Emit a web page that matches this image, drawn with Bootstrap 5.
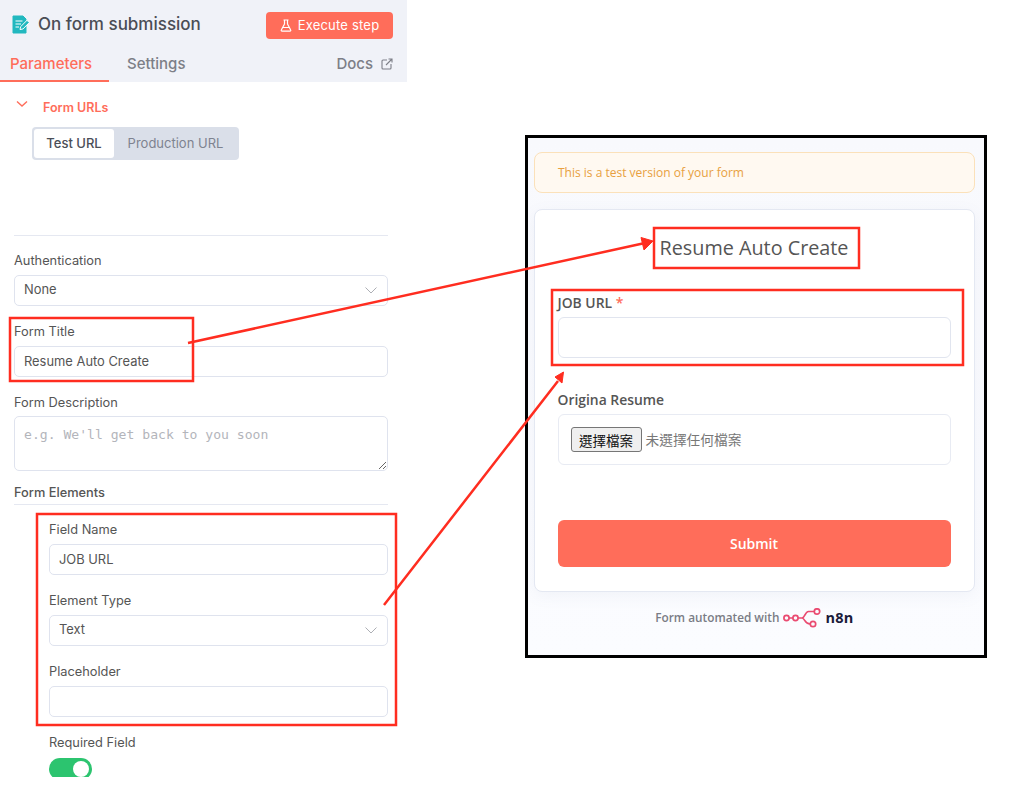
<!DOCTYPE html>
<html lang="zh-Hant">
<head>
<meta charset="utf-8">
<title>n8n form</title>
<link href="https://cdn.jsdelivr.net/npm/bootstrap@5.3.0/dist/css/bootstrap.min.css" rel="stylesheet">
<style>
html,body{margin:0;height:788px;overflow:hidden;background:#fff}
.stage{position:relative;width:1024px;height:788px;align-items:flex-start}
.sidepanel{width:407px;height:777px;overflow:hidden;font-family:Inter,"Liberation Sans",sans-serif;color:#555}
.panelhead{height:82px;background:#f0f2f8;padding:12px 14px 0 10px}
.nodetitle{font-size:17px;font-weight:500;color:#4a4d55;height:27px;gap:8px;margin:-2px 0 0 2px}
.execbtn{width:127px;height:27px;background:#ff6d5a;border:0;border-radius:4px;color:#fff;font-size:13px;font-weight:400;padding:0;letter-spacing:.2px;gap:6px}
.tabsrow{height:43px;margin:0 0 0 -10px;padding:0;}
.tabitem{font-size:15px;font-weight:500;color:#7d7f87;padding:15px 0 0;height:43px;line-height:20px}
.tabon{color:#ff6d5a;width:109px;padding-left:10px;border-bottom:2px solid #ff6d5a}
.tabtwo{margin-left:18px}
.panelbody{padding:0 19px 0 14px}
.urlhead{color:#ff6d5a;font-size:12.500px;font-weight:600;padding:18px 0 0 2px;height:37px;gap:15px;line-height:16px}
.segment{width:207px;height:33px;background:#dadfe9;border-radius:4px;padding:2px;margin:8px 0 0 18px;font-size:13px;font-weight:400;color:#7e8390;box-shadow:none}
.segon{width:80px;background:#fff;border-radius:3px;color:#4b4e57;font-weight:500}
.segoff{flex:1}
.rule{height:1px;background:#e5e8f1;border:0;opacity:1;margin:0}
.rule1{margin-top:74.500px;margin-bottom:14px}
.fieldlabel{font-size:12.800px;line-height:20px;height:20px;margin:0 0 5px;color:#555;padding-top:1px;box-sizing:border-box}
.fieldbox{height:31px;border:1.500px solid #dfe3ee;border-radius:5px;font-size:12.900px;color:#555;padding:0 9px;margin-bottom:15px;box-shadow:none;font-family:Inter,"Liberation Sans",sans-serif;background-color:#fff;line-height:28px}
select.fieldbox{background-image:url("data:image/svg+xml,%3Csvg xmlns='http://www.w3.org/2000/svg' viewBox='0 0 12 7'%3E%3Cpath d='M.5.5 6 6l5.500-5.500' fill='none' stroke='%23a4a6ad' stroke-width='.9'/%3E%3C/svg%3E");background-size:12px 7px;background-position:right 10px center}
.fieldarea{height:55px;font-family:"DejaVu Sans Mono","Liberation Mono",monospace;font-size:13.100px;padding:10px 9px 8px;margin-bottom:11px;line-height:15px}
.fieldarea::placeholder{color:#b3b5bb}
.arealabel{margin-bottom:4px}
.groupname{font-weight:500;height:20px;margin-bottom:2px}
.nested{padding-left:35px;margin-top:14px}
.reqlabel{margin-bottom:6px}
.switchclip{height:19px;overflow:hidden}
.greenswitch{width:43px;height:22px;background:#2cc46f;border-radius:11px;padding:3px 3px 3px 0}
.greenknob{width:16px;height:16px;background:#fff;border-radius:50%}
.previewwin{width:462px;height:523px;margin:135px 0 0 118px;border:3px solid #000;background:linear-gradient(#f8f9fd,#fbfcff);padding:14px 9px 0 6px;font-family:"Open Sans","Noto Sans CJK TC",sans-serif;color:#555}
.testnote{height:41px;background:#fff9f1;border:1px solid #fbe1ba;border-radius:8px;color:#e8a040;font-size:12px;padding:0 0 0 23px;margin:0 0 16px;line-height:39px}
.formcard{height:383px;border:1.500px solid #e4e8f2;border-radius:8px;box-shadow:0 4px 16px rgba(120,130,170,.07);padding:0 23.500px 0 22.500px;background:#fff}
.formtitle{font-size:19.800px;font-weight:400;color:#555;margin:0;padding-top:24px;height:84px;line-height:28px;text-align:center}
.formlabel{font-size:13.900px;font-weight:600;color:#555;height:17px;line-height:17px;margin-bottom:6px}
.star{color:#ff6d5a}
.forminput{height:41px;border:1.500px solid #e1e5ef;border-radius:6px;margin-bottom:33px}
.filebox{height:51px;border:1.500px solid #e8ebf3;border-radius:6px;padding:0 12px;gap:4px;margin-bottom:55px;background:#fff}
.pickbtn{width:71px;height:25px;padding:0;border:1px solid #767676;border-radius:3px;background:#efefef;color:#111;font-size:13.500px;line-height:22px;font-family:"Noto Sans CJK TC",sans-serif}
.nofile{font-size:13.700px;color:#777;font-family:"Noto Sans CJK TC",sans-serif}
.submitbtn{height:47px;width:100%;background:#ff6d5a;border:0;border-radius:6px;color:#fff;font-size:14px;font-weight:600}
.formfoot{height:50px;font-size:11.800px;font-weight:600;color:#7a7c85;gap:4px;padding-top:1px}
.brandname{font-size:14.500px;font-weight:700;color:#1b1b3a;letter-spacing:.3px}
.overlay{position:absolute;left:0;top:0;pointer-events:none}
</style>
</head>
<body>
<div class="stage d-flex">
  <section class="sidepanel">
    <div class="panelhead">
      <div class="d-flex justify-content-between align-items-center">
        <div class="nodetitle d-flex align-items-center">
          <svg width="18" height="19" viewBox="0 0 18 19"><path d="M1 1h10l3 3v14H1z" fill="#22b8bf" stroke="#22b8bf" stroke-linejoin="round"/><path d="M3.500 6h7M3.500 9h5.500M3.500 12h3.500" stroke="#fff" stroke-width="1.200"/><path d="M8 14.500l.6-2.800L15 5.300l2.300 2.300-6.400 6.400z" fill="#22b8bf" stroke="#fff" stroke-width="1"/></svg>
          <span>On form submission</span>
        </div>
        <button class="execbtn btn d-flex align-items-center justify-content-center" type="button">
          <svg width="12" height="13" viewBox="0 0 12 13" fill="none" stroke="#fff" stroke-width="1.200" stroke-linejoin="round"><path d="M3.500 1h5M4.500 1v4L1.300 11a.8.8 0 0 0 .7 1.200h8a.8.8 0 0 0 .7-1.200L7.500 5V1M3 8.500h6"/></svg>
          <span>Execute step</span>
        </button>
      </div>
      <nav class="tabsrow d-flex">
        <div class="tabitem tabon">Parameters</div>
        <div class="tabitem tabtwo">Settings</div>
        <div class="tabitem ms-auto d-flex align-items-start gap-2">Docs
          <svg class="mt-1" width="12" height="12" viewBox="0 0 12 12" fill="none" stroke="#7d7f87" stroke-width="1.100"><path d="M6 2H2a1 1 0 0 0-1 1v7a1 1 0 0 0 1 1h7a1 1 0 0 0 1-1V6M5 7l6-6M7.500 1H11v3.500"/></svg>
        </div>
      </nav>
    </div>
    <div class="panelbody">
      <div class="urlhead d-flex align-items-start">
        <svg class="mt-n1" width="12" height="8" viewBox="0 0 12 8" fill="none" stroke="#ff6d5a" stroke-width="1.400"><path d="M1 1.500l5 4.500 5-4.500"/></svg>
        <span>Form URLs</span>
      </div>
      <div class="segment d-flex">
        <div class="segon d-flex align-items-center justify-content-center">Test URL</div>
        <div class="segoff d-flex align-items-center justify-content-center">Production URL</div>
      </div>
      <hr class="rule rule1">
      <label class="fieldlabel d-block">Authentication</label>
      <select class="form-select fieldbox"><option>None</option></select>
      <label class="fieldlabel d-block">Form Title</label>
      <input class="form-control fieldbox" value="Resume Auto Create">
      <label class="fieldlabel arealabel d-block">Form Description</label>
      <textarea class="form-control fieldbox fieldarea" placeholder="e.g. We'll get back to you soon"></textarea>
      <div class="fieldlabel groupname">Form Elements</div>
      <hr class="rule">
      <div class="nested">
        <label class="fieldlabel d-block">Field Name</label>
        <input class="form-control fieldbox" value="JOB URL">
        <label class="fieldlabel d-block">Element Type</label>
        <select class="form-select fieldbox"><option>Text</option></select>
        <label class="fieldlabel d-block">Placeholder</label>
        <input class="form-control fieldbox">
        <div class="fieldlabel reqlabel">Required Field</div>
        <div class="switchclip"><div class="greenswitch d-flex justify-content-end"><div class="greenknob"></div></div></div>
      </div>
    </div>
  </section>

  <section class="previewwin">
    <div class="testnote alert">This is a test version of your form</div>
    <div class="formcard">
      <h1 class="formtitle">Resume Auto Create</h1>
      <label class="formlabel d-block">JOB URL <span class="star">*</span></label>
      <input class="form-control forminput">
      <label class="formlabel d-block">Origina Resume</label>
      <div class="filebox d-flex align-items-center">
        <button class="pickbtn" type="button">選擇檔案</button>
        <span class="nofile">未選擇任何檔案</span>
      </div>
      <button class="submitbtn btn" type="button">Submit</button>
    </div>
    <div class="formfoot d-flex align-items-center justify-content-center">
      <span>Form automated with</span>
      <svg width="38" height="20" viewBox="0 0 38 20" fill="none" stroke="#ea4b71" stroke-width="1.700"><circle cx="3.500" cy="10" r="2.600"/><circle cx="12.500" cy="10" r="2.600"/><circle cx="34" cy="3.500" r="2.700"/><circle cx="30" cy="16" r="2.700"/><path d="M6 10h4M15 10h4c3 0 3-6.500 6.500-6.500H31M19 10c3 0 2.500 6 8 6"/></svg>
      <span class="brandname">n8n</span>
    </div>
  </section>

  <svg class="overlay" width="1024" height="788" viewBox="0 0 1024 788" fill="none" stroke="#ff2d20" stroke-width="2.500">
    <rect x="10" y="318" width="183" height="63"/>
    <rect x="37" y="514" width="359" height="211"/>
    <rect x="654" y="228" width="205" height="40"/>
    <rect x="552" y="290" width="411" height="75"/>
    <path d="M188 343L645 243M384 605L558 381"/>
    <path d="M653 241L641 237.500L644 250zM563.500 372L555 377L562 383z" fill="#ff2d20" stroke="#ff2d20" stroke-width="1"/>
  </svg>
</div>
<script src="https://cdn.jsdelivr.net/npm/bootstrap@5.3.0/dist/js/bootstrap.bundle.min.js"></script>
</body>
</html>
